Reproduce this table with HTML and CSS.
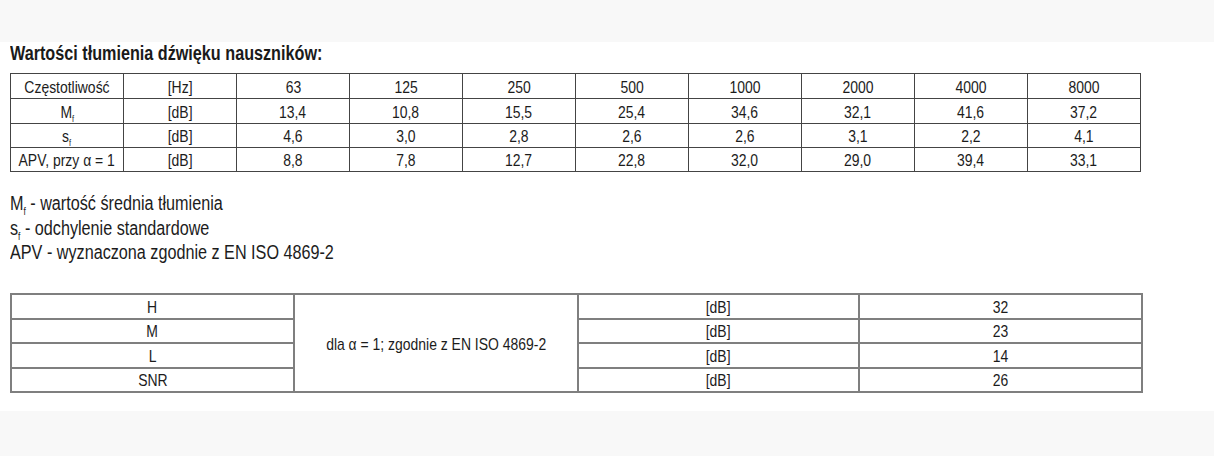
FILE: index.html
```html
<!DOCTYPE html>
<html lang="pl">
<head>
<meta charset="utf-8">
<title>Wartości tłumienia</title>
<link rel="stylesheet" href="styles.css">
</head>
<body>
<div class="page">
  <div class="sheet">
    <h1 class="title"><span>Wartości tłumienia dźwięku nauszników:</span></h1>
    <table class="freq">
      <colgroup>
        <col><col><col><col><col><col><col><col><col><col>
      </colgroup>
      <tr class="r1"><td><span>Częstotliwość</span></td><td><span>[Hz]</span></td><td><span>63</span></td><td><span>125</span></td><td><span>250</span></td><td><span>500</span></td><td><span>1000</span></td><td><span>2000</span></td><td><span>4000</span></td><td><span>8000</span></td></tr>
      <tr class="r2"><td><span>M<sub>f</sub></span></td><td><span>[dB]</span></td><td><span>13,4</span></td><td><span>10,8</span></td><td><span>15,5</span></td><td><span>25,4</span></td><td><span>34,6</span></td><td><span>32,1</span></td><td><span>41,6</span></td><td><span>37,2</span></td></tr>
      <tr class="r3"><td><span>s<sub>f</sub></span></td><td><span>[dB]</span></td><td><span>4,6</span></td><td><span>3,0</span></td><td><span>2,8</span></td><td><span>2,6</span></td><td><span>2,6</span></td><td><span>3,1</span></td><td><span>2,2</span></td><td><span>4,1</span></td></tr>
      <tr class="r4"><td><span>APV, przy α = 1</span></td><td><span>[dB]</span></td><td><span>8,8</span></td><td><span>7,8</span></td><td><span>12,7</span></td><td><span>22,8</span></td><td><span>32,0</span></td><td><span>29,0</span></td><td><span>39,4</span></td><td><span>33,1</span></td></tr>
    </table>
    <div class="legend">
      <p><span>M<sub>f</sub> - wartość średnia tłumienia</span></p>
      <p><span>s<sub>f</sub> - odchylenie standardowe</span></p>
      <p><span>APV - wyznaczona zgodnie z EN ISO 4869-2</span></p>
    </div>
    <table class="snr">
      <colgroup>
        <col class="c1"><col class="c2"><col class="c3"><col class="c4">
      </colgroup>
      <tr class="r1"><td><span>H</span></td><td rowspan="4" class="mid"><span>dla α = 1; zgodnie z EN ISO 4869-2</span></td><td><span>[dB]</span></td><td><span>32</span></td></tr>
      <tr class="r2"><td><span>M</span></td><td><span>[dB]</span></td><td><span>23</span></td></tr>
      <tr class="r3"><td><span>L</span></td><td><span>[dB]</span></td><td><span>14</span></td></tr>
      <tr class="r4"><td><span>SNR</span></td><td><span>[dB]</span></td><td><span>26</span></td></tr>
    </table>
  </div>
</div>
</body>
</html>
```

FILE: styles.css
```css
html, body {
  margin: 0;
  padding: 0;
}
body {
  background: #f8f8f8;
  font-family: "Liberation Sans", Arial, sans-serif;
  color: #1c1c1c;
}
.page {
  width: 1214px;
  height: 456px;
  overflow: hidden;
}
.sheet {
  margin-top: 42px;
  height: 369px;
  background: #ffffff;
  padding-left: 10px;
  box-sizing: border-box;
  overflow: hidden;
}
/* narrow (Arial Narrow-like) text */
.title span,
.legend span,
td > span {
  display: inline-block;
  white-space: nowrap;
}
.title span,
.legend span {
  transform: scaleX(0.83);
  transform-origin: left center;
}
td > span {
  transform: scaleX(0.82);
  transform-origin: center center;
  margin: 0 -30px;
}
.title {
  margin: 0;
  font-size: 19.5px;
  line-height: 22px;
  font-weight: bold;
  color: #1a1a1a;
}
table {
  border-collapse: collapse;
  table-layout: fixed;
}
td {
  padding: 0 0 2px;
  text-align: center;
  vertical-align: bottom;
  font-size: 17px;
  line-height: 17px;
  white-space: nowrap;
}
sub {
  font-size: 9px;
  line-height: 0;
  vertical-align: -4px;
}
.freq {
  margin-top: 9px;
  width: 1131px;
}
.freq col {
  width: 113px;
}
.freq td {
  border: 1px solid #444444;
}
.freq .r1 { height: 25px; }
.freq .r2 { height: 25px; }
.freq .r3 { height: 24px; }
.freq .r4 { height: 24px; }
.legend {
  margin-top: 19px;
}
.legend p {
  margin: 0;
  font-size: 19.5px;
  line-height: 24.5px;
}
.legend sub {
  font-size: 10px;
  vertical-align: -5px;
}
.snr {
  margin-top: 28px;
  width: 1131px;
}
.snr .c1 { width: 283px; }
.snr .c2 { width: 284px; }
.snr .c3 { width: 281px; }
.snr .c4 { width: 283px; }
.snr td {
  border: 2px solid #7f7f7f;
}
.snr td.mid {
  vertical-align: middle;
  padding: 4px 0 0;
}
.snr .r1 { height: 25px; }
.snr .r2 { height: 24px; }
.snr .r3 { height: 25px; }
.snr .r4 { height: 24px; }
```
